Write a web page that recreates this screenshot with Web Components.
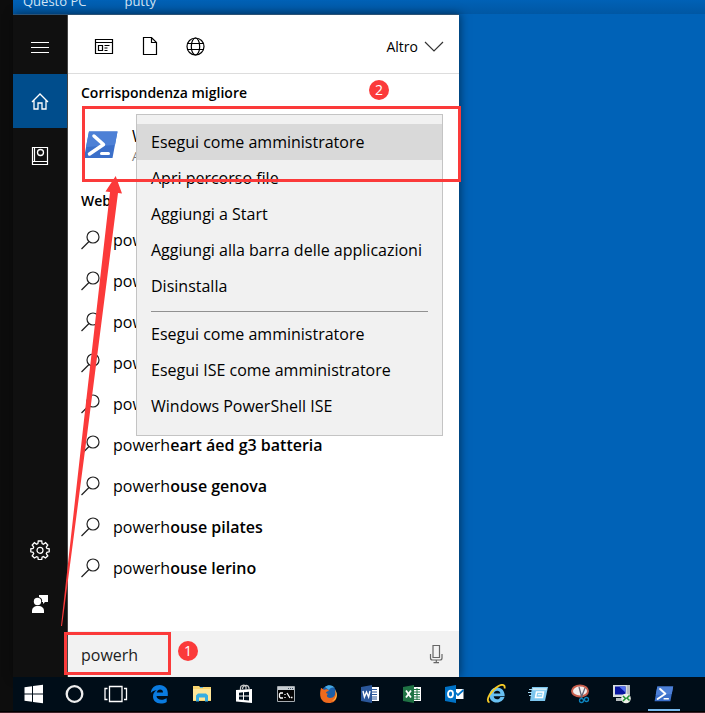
<!DOCTYPE html>
<html lang="it">
<head>
<meta charset="utf-8">
<meta name="viewport" content="width=device-width, initial-scale=1">
<title>Windows PowerShell</title>
<style>
	body {
		margin: 0;
		background: #0d0d0d;
		font-family: "Open Sans", "Noto Sans", sans-serif;
		font-size: 16px;
	}
</style>
</head>
<body>
<win-desktop>
	<desktop-label slot="labels">Questo PC</desktop-label>
	<desktop-label slot="labels">putty</desktop-label>
	<side-rail slot="start">
		<rail-button icon="menu" label="Menu"></rail-button>
		<rail-button icon="home" label="Home" active></rail-button>
		<rail-button icon="notebook" label="Blocco appunti"></rail-button>
		<rail-button slot="bottom" icon="gear" label="Impostazioni"></rail-button>
		<rail-button slot="bottom" icon="feedback" label="Feedback"></rail-button>
	</side-rail>
	<search-panel slot="start" value="powerh">
		<best-match name="W" kind="A"></best-match>
		<search-result slot="web" typed="pow"></search-result>
		<search-result slot="web" typed="pow"></search-result>
		<search-result slot="web" typed="pow"></search-result>
		<search-result slot="web" typed="pow"></search-result>
		<search-result slot="web" typed="pow"></search-result>
		<search-result slot="web" typed="powerh">eart áed g3 batteria</search-result>
		<search-result slot="web" typed="powerh">ouse genova</search-result>
		<search-result slot="web" typed="powerh">ouse pilates</search-result>
		<search-result slot="web" typed="powerh">ouse lerino</search-result>
		<context-menu slot="menu">
			<menu-item active>Esegui come amministratore</menu-item>
			<menu-item>Apri percorso file</menu-item>
			<menu-item>Aggiungi a Start</menu-item>
			<menu-item>Aggiungi alla barra delle applicazioni</menu-item>
			<menu-item>Disinstalla</menu-item>
			<menu-separator></menu-separator>
			<menu-item>Esegui come amministratore</menu-item>
			<menu-item>Esegui ISE come amministratore</menu-item>
			<menu-item>Windows PowerShell ISE</menu-item>
		</context-menu>
	</search-panel>
	<task-bar slot="taskbar">
		<task-button slot="system" icon="windows" label="Start"></task-button>
		<task-button slot="system" icon="cortana" label="Cortana"></task-button>
		<task-button slot="system" icon="taskview" label="Visualizzazione attività"></task-button>
		<task-button icon="edge" label="Edge"></task-button>
		<task-button icon="explorer" label="Esplora file"></task-button>
		<task-button icon="store" label="Store"></task-button>
		<task-button icon="cmd" label="Prompt dei comandi"></task-button>
		<task-button icon="firefox" label="Firefox"></task-button>
		<task-button icon="word" label="Word"></task-button>
		<task-button icon="excel" label="Excel"></task-button>
		<task-button icon="outlook" label="Outlook"></task-button>
		<task-button icon="ie" label="Internet Explorer"></task-button>
		<task-button icon="run" label="Esegui"></task-button>
		<task-button icon="snip" label="Strumento di cattura"></task-button>
		<task-button icon="remote" label="Desktop remoto"></task-button>
		<task-button icon="powershell" label="PowerShell" active></task-button>
	</task-bar>
	<mark-layer slot="marks"></mark-layer>
</win-desktop>

<script>
const icons = {
	menu: ["0 0 20 20", `<path d="M1 5.500h18M1 10.500h18M1 15.500h18" stroke="#fff" stroke-width="1.100"/>`],
	home: ["0 0 20 20", `<path d="M2 11 10 3l8 8M4 9.500V18h4v-6h4v6h4V9.500" fill="none" stroke="#fff" stroke-width="1.300"/>`],
	notebook: ["0 0 20 20", `<path d="M2.500 2.500h15v17h-15zM2.500 16.500h15M4.500 3v13" fill="none" stroke="#fff" stroke-width="1.200"/><circle cx="10.500" cy="7.500" r="3" fill="none" stroke="#fff" stroke-width="1.300"/>`],
	gear: ["0 0 20 20", `<path d="M8.300 1h3.400l.4 2.600 1.300.6 2.200-1.500 2.200 2.300-1.500 2.100.6 1.300 2.300.4v3l-2.300.5-.6 1.300 1.500 2.200-2.300 2.200-2.100-1.400-1.300.5-.4 2.500H8.300l-.4-2.500-1.300-.5-2.200 1.400-2.200-2.200 1.500-2.200-.6-1.300L.8 11.800v-3l2.300-.4.6-1.300L2.200 5l2.200-2.300 2.200 1.500 1.300-.6z" fill="none" stroke="#fff" stroke-width="1.300"/><circle cx="10" cy="10.300" r="3" fill="none" stroke="#fff" stroke-width="1.200"/>`],
	feedback: ["0 0 20 20", `<path d="M9 1h9v7h-3l-2 2V8h-1A4 4 0 0 0 9 3zM2 19v-2c0-3 2-5 6-5s6 2 6 5v2z" fill="#fff"/><circle cx="7.500" cy="7.500" r="3.700" fill="#fff"/>`],
	apps: ["0 0 20 20", `<path d="M1.500 3.500h17v14h-17zM2 6.500h16M10.500 9.500h5M10.500 12h3M10.500 14.500h3" fill="none" stroke="#000" stroke-width="1.200"/><path d="M4.500 9.500h4v5h-4z" fill="none" stroke="#000" stroke-width="1.200"/>`],
	page: ["0 0 20 20", `<path d="M3.500 1.500h8l5 5v12h-13zM11.500 1.500v5h5" fill="none" stroke="#000" stroke-width="1.200"/>`],
	globe: ["0 0 20 20", `<g fill="none" stroke="#000" stroke-width="1.200"><circle cx="9.500" cy="10.500" r="8.500"/><ellipse cx="9.500" cy="10.500" rx="4.200" ry="8.500"/><path d="M1.500 7.500h16M1.500 13.500h16"/></g>`],
	chevron: ["0 0 20 20", `<path d="m1 6 9 9 9-9" fill="none" stroke="#333" stroke-width="1.200"/>`],
	search: ["0 0 20 20", `<circle cx="12" cy="7" r="6" fill="none" stroke="#222" stroke-width="1.200"/><path d="M8 11.500.5 19" stroke="#222" stroke-width="1.300"/>`],
	mic: ["0 0 20 20", `<path d="M7 1.500h6.500v12H7zM4.500 10v4c0 1 1 2 2 2h7.500c1 0 2-1 2-2v-4M10.300 16v3M7.500 18.700h5.500" fill="none" stroke="#666" stroke-width="1.200"/>`],
	windows: ["0 0 20 20", `<path d="m.5 3.200 7.500-1v7.300H.5zM9 2l10-1.300v8.800H9zM.5 10.500H8v7.300l-7.500-1zM9 10.500h10v8.800L9 17.900z" fill="#fff"/>`],
	cortana: ["0 0 20 20", `<circle cx="9.500" cy="10" r="7.800" fill="none" stroke="#eee" stroke-width="2.300"/>`],
	taskview: ["0 0 24 20", `<path d="M5.500 2.500H18v15H5.500zM3.500 4.500H1v11h2.500M20 4.500h2.500v11H20" fill="none" stroke="#fff" stroke-width="1.300"/>`],
	edge: ["0 0 20 20", `<path d="M.8 9C1.300 3.700 4.800 1 9.500 1c5.300 0 8.300 3.700 8.300 8v3H6.500c.2 2.600 2.300 3.700 5 3.700 2 0 3.800-.6 5.200-1.500v3.700c-1.700 1-3.700 1.500-6 1.500-4.800 0-7.700-2.900-7.700-7 0-2.900 1.500-5 3.700-6.100C4.300 6.400 2.300 7.300.8 9zm6-.4H13c0-2-1-3.100-2.900-3.100-1.700 0-2.900 1.200-3.300 3.100z" fill="#0a7be0"/>`],
	explorer: ["0 0 20 20", `<path d="M1 2h6l1 1h11v14H1z" fill="#f7d36f"/><path d="M1 5h18v11H1z" fill="#ffe699"/><path d="M8 3h3v1H8z" fill="#5bb6df"/><path d="M4 17.500v-6l2-2h8l2 2v6h-3v-4H7v4z" fill="#37aee2"/>`],
	store: ["0 0 20 20", `<path d="m2 6 16-1v14L2 17.500z" fill="#fff"/><path d="M6.500 6V4c0-3 4.500-4 5.500-1v3M8.500 5c0-4 5.500-5 6.500-1v2" fill="none" stroke="#ccc" stroke-width="1.200"/><path d="m5 8.700 4-.4v3.200H5zM10 8.200l5-.5v3.800h-5zM5 12.500h4v3.300l-4-.4zM10 12.500h5v3.900l-5-.5z" fill="#00101f"/>`],
	cmd: ["0 0 20 20", `<path d="M1.500 2.500h17v15h-17z" fill="#050505" stroke="#a5abb0"/><path d="M2 3h16v3H2z" fill="#c6cdd2"/><path d="M12 4.500h1m1 0h1m1 0h1" stroke="#456"/><path d="M7 9H4.500L3.500 10v3l1 1H7M9 10v1M9 13v1M11 9l3 5M15 13.500h1.500" fill="none" stroke="#fff" stroke-width="1.300"/>`],
	firefox: ["0 0 20 20", `<circle cx="11" cy="9" r="7.500" fill="#1c5fa8"/><path d="M7 3c3-3 8-2 10 1-3-1-5 0-6 2" fill="#45a9e5"/><path d="M3 4c1 0 2 1 3 2 2-1 4-1 5 1-2 0-3 1-3 2l2 1c-2 1-1 4 2 4 4 0 6-3 5-8 3 4 3 13-6 13C2 19 1 11 3 4z" fill="#ee6a1e"/><path d="M17 6c2 4 1 9-3 11 5-1 6-7 3-11z" fill="#ffd34d"/>`],
	word: ["0 0 20 20", `<path d="M10 3h9v14h-9z" fill="#fff"/><path d="M11 5.500h6M11 8h6M11 10.500h6M11 13h6M11 15h6" stroke="#2b579a"/><path d="m1 3 11-2v18L1 17z" fill="#2b579a"/><path d="m3 7 1.400 6L6.500 8l2.100 5L10 7" fill="none" stroke="#fff" stroke-width="1.400"/>`],
	excel: ["0 0 20 20", `<path d="M10 3h9v14h-9z" fill="#fff"/><path d="M12 5.500h6M12 8h6M12 10.500h6M12 13h6M12 15.300h6M15 4v12" stroke="#1f7244"/><path d="m1 3 11-2v18L1 17z" fill="#1f7244"/><path d="m4 6.500 5 7M9 6.500l-5 7" stroke="#fff" stroke-width="1.800"/>`],
	outlook: ["0 0 20 20", `<path d="M11 5h8.500v10H11z" fill="#fff"/><path d="m11 8 3 3 5.500-5" fill="none" stroke="#0072c6" stroke-width="1.700"/><path d="m1 3 11-2v18L1 17z" fill="#0072c6"/><ellipse cx="6.500" cy="10" rx="2.500" ry="3.300" fill="none" stroke="#fff" stroke-width="1.800"/>`],
	ie: ["0 0 20 20", `<path d="M18.500 13c-1 3-4 5.500-7.600 5.500C6 18.500 3.500 15.500 3.500 11.200 3.500 7 6.500 3.500 11 3.500c5 0 8 4 7.700 8.800H7.700c.2 2 1.500 3 3.500 3 1.500 0 2.500-.7 3.200-2.300zM7.800 9.500h6.600c-.2-1.700-1.400-2.700-3.200-2.700s-3.100 1-3.400 2.700z" fill="#68c0f2"/><path d="M3.500 18.500c-5-2 2-12.500 9-16.500 4-2.300 7-1 6 2.500" fill="none" stroke="#f6cb26" stroke-width="1.800"/>`],
	run: ["0 0 20 20", `<path d="M4 3h16l-3 14H2z" fill="#7cc6ee"/><path d="m5 4 14 .2-.5 2H4.500z" fill="#c8e9f9"/><path d="M8.500 8h7l-1 5.500h-7z" fill="#8bd0f3" stroke="#fff" stroke-width="1.500"/><path d="M10 10.700h3.500" stroke="#fff"/><path d="M1 5.500h4M0 8.500h4M1 11.500h3" stroke="#a7dcf6" stroke-width="1.200"/>`],
	snip: ["0 0 20 20", `<ellipse cx="10" cy="7" rx="8" ry="5.500" fill="#f2eeee" stroke="#c75e4d" stroke-width="2"/><path d="m9 3 3 11M15 4l-4 10" stroke="#667" stroke-width="1.300"/><circle cx="11.500" cy="16.500" r="2" fill="none" stroke="#0d83bd" stroke-width="1.300"/><circle cx="16.500" cy="15.500" r="2" fill="none" stroke="#0d83bd" stroke-width="1.300"/>`],
	remote: ["0 0 20 20", `<path d="M1 1h14v12H1z" fill="#d6dcdf"/><path d="M3 2.500h10.500v8H3z" fill="#0715a0"/><path d="M7 2.500h6.500v6z" fill="#5471f3"/><path d="M15 1h3v10h-3zM4 14h8v3H4z" fill="#b7bdbf"/><circle cx="14" cy="14.500" r="4.800" fill="#eef2e9"/><path d="m11 12 2.500 2.500L11 17M17.500 11.500 15 14l2.500 2.500" fill="none" stroke="#219334" stroke-width="1.500"/>`],
	powershell: ["0 0 36 30", `<path d="M6 1.500h28.500L29.500 28H1z" fill="#3b6fc9"/><path d="M6 1.500h28.500L32 15 3 17z" fill="#4d80d6"/><path d="m11 6 9.500 8.500L6.500 24" fill="none" stroke="#fff" stroke-width="3.500" stroke-linejoin="round" stroke-linecap="round"/><path d="M18.500 23.500h7" stroke="#fff" stroke-width="3" stroke-linecap="round"/>`],
}

const buttonReset = `
	button {
		appearance: none;
		margin: 0;
		padding: 0;
		border: 0;
		background: none;
		color: inherit;
		font: inherit;
		text-align: left;
	}
`

class ShadowElement extends HTMLElement {
	constructor() {
		super()
		this.attachShadow({ mode: "open" })
	}
	connectedCallback() {
		this.shadowRoot.innerHTML = this.render()
	}
	attr(name) {
		return this.getAttribute(name) || ""
	}
}

customElements.define("win-icon", class extends ShadowElement {
	render() {
		const [box, shape] = icons[this.attr("name")]
		return /*html*/ `<style>
			:host { display: block; width: 20px; height: 20px; }
			svg { display: block; width: 100%; height: 100%; }
		</style>
		<svg viewBox="${box}" aria-hidden="true">${shape}</svg>`
	}
})

customElements.define("win-desktop", class extends ShadowElement {
	render() {
		return /*html*/ `<style>
			:host {
				display: flex;
				flex-direction: column;
				position: relative;
				box-sizing: border-box;
				min-height: 100vh;
				padding: 0 0 2px 13px;
				background: linear-gradient(#000 1px, #3b2128 1px) 0 100% / 100% 2px no-repeat, #0d0d0d;
			}
			.labels {
				display: flex;
				align-items: flex-end;
				gap: 38px;
				height: 14px;
				padding-left: 10px;
				overflow: hidden;
				background: linear-gradient(#0061b6, #0057a3);
			}
			.screen { display: flex; flex: 1; background: #0062b7; }
			.start {
				display: flex;
				flex: 0 1 446px;
				min-width: 0;
				border-top: 1px solid #2b5275;
				box-shadow: 1px 0 9px rgba(0, 0, 0, .5);
			}
		</style>
		<div class="labels"><slot name="labels"></slot></div>
		<div class="screen"><div class="start"><slot name="start"></slot></div></div>
		<slot name="taskbar"></slot>
		<slot name="marks"></slot>`
	}
})

customElements.define("desktop-label", class extends ShadowElement {
	render() {
		return /*html*/ `<style>
			:host { display: block; padding-bottom: 3px; color: #d5e6f5; font-size: 13px; line-height: 20px; }
		</style><slot></slot>`
	}
})

customElements.define("side-rail", class extends ShadowElement {
	render() {
		return /*html*/ `<style>
			:host {
				display: flex;
				flex-direction: column;
				flex: none;
				width: 54px;
				background: #101010;
				border-right: 1px solid #444;
			}
			.bottom { margin-top: auto; padding-bottom: 46px; }
		</style>
		<slot></slot>
		<div class="bottom"><slot name="bottom"></slot></div>`
	}
})

customElements.define("rail-button", class extends ShadowElement {
	render() {
		return /*html*/ `<style>
			${buttonReset}
			:host { display: block; }
			:host([active]) { background: #004d8c; }
			:host([icon="menu"]) { padding: 5px 0 0; }
			button { display: grid; place-items: center; width: 100%; height: 54px; }
		</style>
		<button aria-label="${this.attr("label")}"><win-icon name="${this.attr("icon")}"></win-icon></button>`
	}
})

customElements.define("search-panel", class extends ShadowElement {
	render() {
		return /*html*/ `<style>
			${buttonReset}
			:host {
				display: flex;
				flex-direction: column;
				flex: 1;
				min-width: 0;
				position: relative;
				background: #fff;
				color: #000;
			}
			header {
				display: flex;
				align-items: center;
				gap: 26px;
				padding: 4px 15px 0 26px;
				box-sizing: border-box;
				height: 59px;
				border-bottom: 1px solid #ddd;
			}
			.more { display: flex; align-items: center; gap: 6px; margin-left: auto; font-size: 14px; }
			h2 { margin: 0; padding-left: 13px; font-size: 14px; font-weight: 600; line-height: 20px; }
			.best { padding-top: 9px; }
			.web { padding-bottom: 32px; }
			.web h2 { padding-bottom: 8px; }
			.field {
				display: flex;
				align-items: center;
				margin-top: auto;
				height: 46px;
				padding: 0 13px;
				background: #f2f2f2;
			}
			input {
				flex: 1;
				min-width: 0;
				padding: 2px 0 0;
				border: 0;
				outline: 0;
				background: none;
				color: #222;
				font: inherit;
			}
		</style>
		<header>
			<button aria-label="App"><win-icon name="apps"></win-icon></button>
			<button aria-label="Documenti"><win-icon name="page"></win-icon></button>
			<button aria-label="Web"><win-icon name="globe"></win-icon></button>
			<button class="more">Altro <win-icon name="chevron"></win-icon></button>
		</header>
		<section class="best"><h2>Corrispondenza migliore</h2><slot></slot></section>
		<section class="web"><h2>Web</h2><slot name="web"></slot></section>
		<div class="field">
			<input type="text" aria-label="Cerca" value="${this.attr("value")}">
			<button aria-label="Microfono"><win-icon name="mic"></win-icon></button>
		</div>
		<slot name="menu"></slot>`
	}
})

customElements.define("best-match", class extends ShadowElement {
	render() {
		return /*html*/ `<style>
			${buttonReset}
			:host { display: block; }
			button { display: flex; align-items: center; gap: 13px; width: 100%; height: 88px; padding: 0 0 5px 15px; box-sizing: border-box; }
			win-icon { width: 36px; height: 30px; }
			.text { display: grid; }
			small { color: #777; font-size: 13px; }
		</style>
		<button>
			<win-icon name="powershell"></win-icon>
			<span class="text"><span>${this.attr("name")}</span><small>${this.attr("kind")}</small></span>
		</button>`
	}
})

customElements.define("search-result", class extends ShadowElement {
	render() {
		return /*html*/ `<style>
			${buttonReset}
			:host { display: block; }
			button { display: flex; align-items: center; gap: 12px; width: 100%; height: 41px; padding: 0 13px; }
			b { font-weight: 600; }
		</style>
		<button><win-icon name="search"></win-icon><span>${this.attr("typed")}<b><slot></slot></b></span></button>`
	}
})

customElements.define("context-menu", class extends ShadowElement {
	connectedCallback() {
		super.connectedCallback()
		this.setAttribute("role", "menu")
	}
	render() {
		return /*html*/ `<style>
			:host {
				display: block;
				position: absolute;
				top: 99px;
				left: 68px;
				right: 16px;
				padding: 9px 0 11px;
				border: 1px solid #c4c4c4;
				background: #f1f1f1;
			}
		</style><slot></slot>`
	}
})

customElements.define("menu-item", class extends ShadowElement {
	render() {
		return /*html*/ `<style>
			${buttonReset}
			:host { display: block; }
			:host([active]) { background: #d9d9d9; }
			button { width: 100%; height: 36px; padding: 0 14px; white-space: nowrap; }
		</style>
		<button role="menuitem"><slot></slot></button>`
	}
})

customElements.define("menu-separator", class extends ShadowElement {
	render() {
		return /*html*/ `<style>
			:host { display: block; margin: 7px 14px 4px; border-top: 1px solid #919191; }
		</style>`
	}
})

customElements.define("task-bar", class extends ShadowElement {
	render() {
		return /*html*/ `<style>
			:host { display: flex; position: relative; height: 34px; background: #000d18; }
			.system { display: flex; padding-right: 3px; --task-width: 41px; }
		</style>
		<div class="system"><slot name="system"></slot></div>
		<slot></slot>`
	}
})

customElements.define("task-button", class extends ShadowElement {
	render() {
		return /*html*/ `<style>
			${buttonReset}
			:host { display: flex; justify-content: center; width: var(--task-width, 42px); }
			button { display: grid; place-items: center; width: 32px; height: 34px; box-sizing: border-box; }
			:host([active]) button { border-bottom: 2px solid #76b9ed; padding-top: 2px; }
			:host([icon="taskview"]) win-icon { width: 24px; }
		</style>
		<button aria-label="${this.attr("label")}"><win-icon name="${this.attr("icon")}"></win-icon></button>`
	}
})

// red boxes, step numbers and arrow drawn over the desktop
customElements.define("mark-layer", class extends ShadowElement {
	render() {
		return /*html*/ `<style>
			:host { display: block; position: absolute; inset: 0; overflow: hidden; pointer-events: none; }
			svg { display: block; width: 705px; height: 713px; }
			text { fill: #fff; font-size: 14px; text-anchor: middle; }
		</style>
		<svg viewBox="0 0 705 713">
			<g fill="none" stroke="#fb3a3a" stroke-width="3">
				<rect x="83.500" y="107.500" width="376" height="73"/>
				<rect x="65.500" y="633.500" width="104" height="40"/>
			</g>
			<g fill="#fb3a3a">
				<path d="M61 626 84 420l26-228-4.500-.5 10.200-15.500 6.300 17.500-4-.5L89 420 62 626z"/>
				<circle cx="379" cy="90" r="10"/>
				<circle cx="188" cy="651" r="10"/>
			</g>
			<text x="379" y="95">2</text>
			<text x="188" y="656">1</text>
		</svg>`
	}
})
</script>
</body>
</html>
